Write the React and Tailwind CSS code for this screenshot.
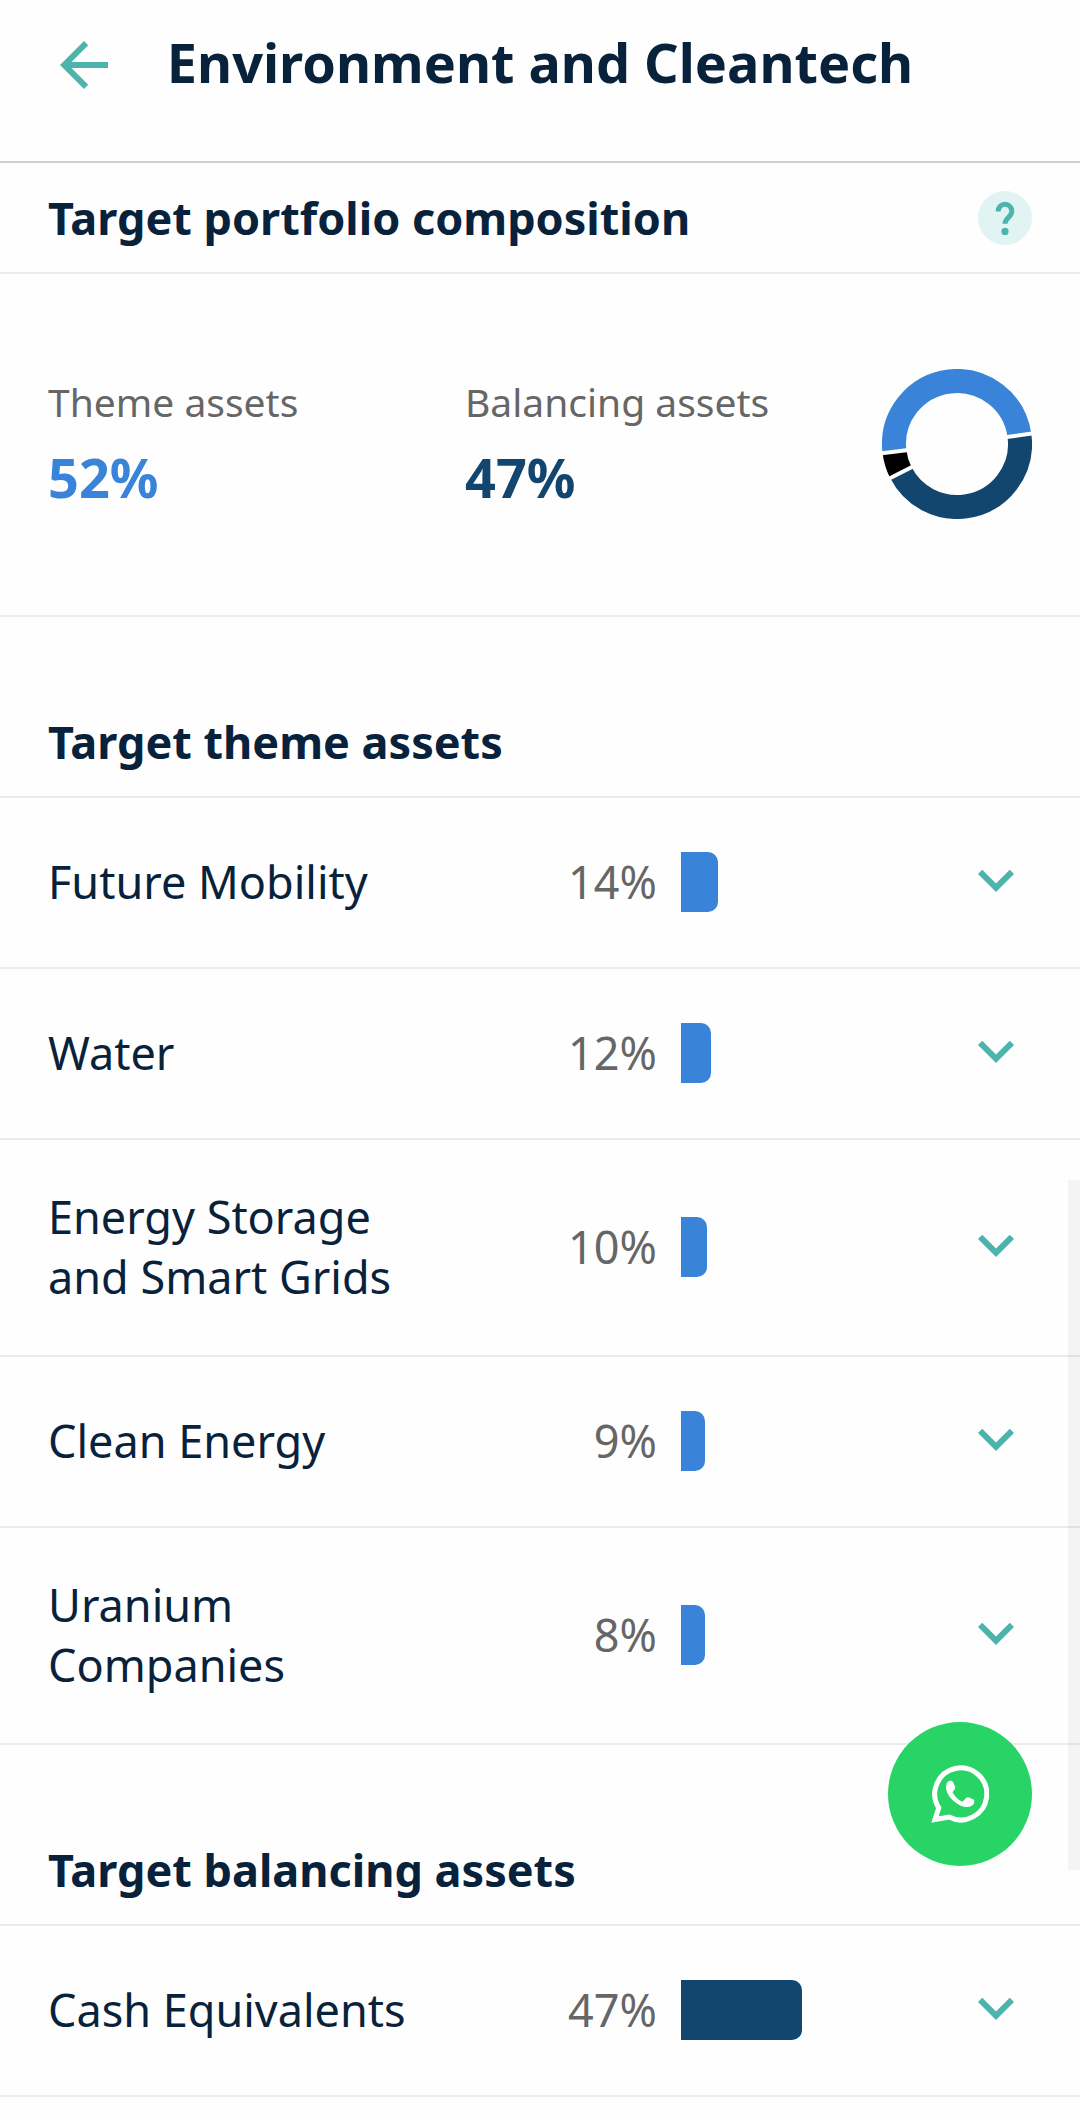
import { useState } from "react";
import { MdArrowBack, MdExpandMore } from "react-icons/md";

const THEME_ASSETS = [
  { name: "Future Mobility", weight: 14.4 },
  { name: "Water", weight: 11.8 },
  { name: "Energy Storage and Smart Grids", weight: 10 },
  { name: "Clean Energy", weight: 9 },
  { name: "Uranium Companies", weight: 8 },
];

const BALANCING_ASSETS = [{ name: "Cash Equivalents", weight: 47.4 }];

// Angles in degrees, clockwise from 3 o'clock
const SLICES = [
  { id: "theme", start: 173, sweep: 179, color: "#3984d8" },
  { id: "balancing", start: 352, sweep: 161, color: "#12466f" },
  { id: "other", start: 153, sweep: 20, color: "#000000" },
];

function Donut() {
  return (
    <svg viewBox="0 0 150 150" className="h-[150px] w-[150px]" role="img" aria-label="Portfolio composition">
      {SLICES.map(slice => (
        <g key={slice.id} transform={`rotate(${slice.start} 75 75)`}>
          <circle
            cx="75"
            cy="75"
            r="63"
            fill="none"
            stroke={slice.color}
            strokeWidth="24"
            pathLength="360"
            strokeDasharray={`${slice.sweep} ${360 - slice.sweep}`}
          />
        </g>
      ))}
      {SLICES.map(slice => (
        <line
          key={slice.id}
          x1="120"
          y1="75"
          x2="152"
          y2="75"
          stroke="#fefefe"
          strokeWidth="4"
          transform={`rotate(${slice.start} 75 75)`}
        />
      ))}
    </svg>
  );
}

function HelpIcon() {
  return (
    <svg viewBox="0 0 54 54" className="h-[54px] w-[54px]" fill="none" aria-hidden="true">
      <path
        d="M20.2 20.500V20a6.800 6.800 0 0 1 13.600 0c0 3.500-1.800 5-3.800 7s-3 3.200-3 5.800"
        stroke="#4db3ad"
        strokeWidth="5"
      />
      <circle cx="27" cy="40.400" r="3.600" fill="#4db3ad" />
    </svg>
  );
}

function WhatsappIcon() {
  return (
    <svg viewBox="0 0 58 58" className="h-[58px] w-[58px]" fill="none" aria-hidden="true">
      <path d="M7.800 42.800A26 26 0 1 1 18 52.100L4 54.500Z" stroke="#fff" strokeWidth="5" />
      <path
        d="M17.500 16.300C19 15.600 21 15.600 22 17L24 21.500C24.500 23 24.200 24 21.500 27.200C23.500 31.500 27.500 35 31.500 36.800L35 33C36 32 37 32 38 32.400L42.500 34.600C43.600 35.200 43.400 36.500 43 38C42 41 38 42.300 35 42C25 41 15 30 15 22.500C15 19.500 16 17.200 17.500 16.300Z"
        fill="#fff"
      />
    </svg>
  );
}

function SectionTitle({ children, action }) {
  return (
    <div className="flex min-h-[111px] items-center justify-between border-b-2 border-[#ebebeb] px-12">
      <h2 className="text-[45px] leading-[60px] font-bold">{children}</h2>
      {action}
    </div>
  );
}

function AssetRow({ asset, barClass }) {
  const [open, setOpen] = useState(false);

  return (
    <li className="grid min-h-[171px] grid-cols-[minmax(0,1fr)_225px_255px_72px] items-center gap-x-6 border-b-2 border-[#ebebeb] px-12 pt-[47px] pb-12 text-[45px] leading-[60px]">
      <span>{asset.name}</span>
      <span className="text-right text-[#666666]">{Math.round(asset.weight)}%</span>
      <div>
        <div
          className={`h-[60px] min-w-6 rounded-r-[10px] ${barClass}`}
          style={{ width: `${asset.weight}%` }}
        />
      </div>
      <button
        type="button"
        aria-label={`Show ${asset.name}`}
        aria-expanded={open}
        onClick={() => setOpen(!open)}
        className="-mt-2 -mb-1 cursor-pointer text-[#4db3ad]"
      >
        <MdExpandMore className={open ? "size-[72px] rotate-180" : "size-[72px]"} />
      </button>
    </li>
  );
}

function AssetList({ title, assets, barClass }) {
  return (
    <section className="pt-[70px]">
      <SectionTitle>{title}</SectionTitle>
      <ul>
        {assets.map(asset => (
          <AssetRow key={asset.name} asset={asset} barClass={barClass} />
        ))}
      </ul>
    </section>
  );
}

export default function App() {
  return (
    <div className="min-h-screen bg-[#fefefe] font-['Noto_Sans',sans-serif] text-[#09223c]">
      <header className="flex items-start border-b-2 border-[#d0d0d0] px-12 pt-[29px] pb-[60px]">
        <button type="button" aria-label="Back" className="cursor-pointer text-[#4db3ad]">
          <MdArrowBack className="size-[72px]" />
        </button>
        <h1 className="flex-1 pr-[72px] text-center text-[54px] leading-[66px] font-bold">
          Environment and Cleantech
        </h1>
      </header>

      <main>
        <SectionTitle
          action={
            <button type="button" aria-label="Help" className="cursor-pointer rounded-full bg-[#e1f4f3]">
              <HelpIcon />
            </button>
          }
        >
          Target portfolio composition
        </SectionTitle>

        <div className="grid grid-cols-[1fr_1fr_150px] items-start border-b-2 border-[#ebebeb] px-12 pt-[95px] pb-24">
          <div>
            <p className="text-[39px] leading-[66px] text-[#666666]">Theme assets</p>
            <p className="text-[54px] leading-[84px] font-bold text-[#3984d8]">52%</p>
          </div>
          <div>
            <p className="text-[39px] leading-[66px] text-[#666666]">Balancing assets</p>
            <p className="text-[54px] leading-[84px] font-bold text-[#12466f]">47%</p>
          </div>
          <Donut />
        </div>

        <AssetList title="Target theme assets" assets={THEME_ASSETS} barClass="bg-[#3984d8]" />
        <AssetList title="Target balancing assets" assets={BALANCING_ASSETS} barClass="bg-[#12466f]" />
      </main>

      {/* Scroll thumb */}
      <div className="fixed right-0 bottom-[246px] h-[690px] w-3 bg-black/4" />

      <a
        href="#chat"
        aria-label="Chat on WhatsApp"
        className="fixed right-12 bottom-[250px] flex size-36 items-center justify-center rounded-full bg-[#28d466]"
      >
        <WhatsappIcon />
      </a>
    </div>
  );
}
